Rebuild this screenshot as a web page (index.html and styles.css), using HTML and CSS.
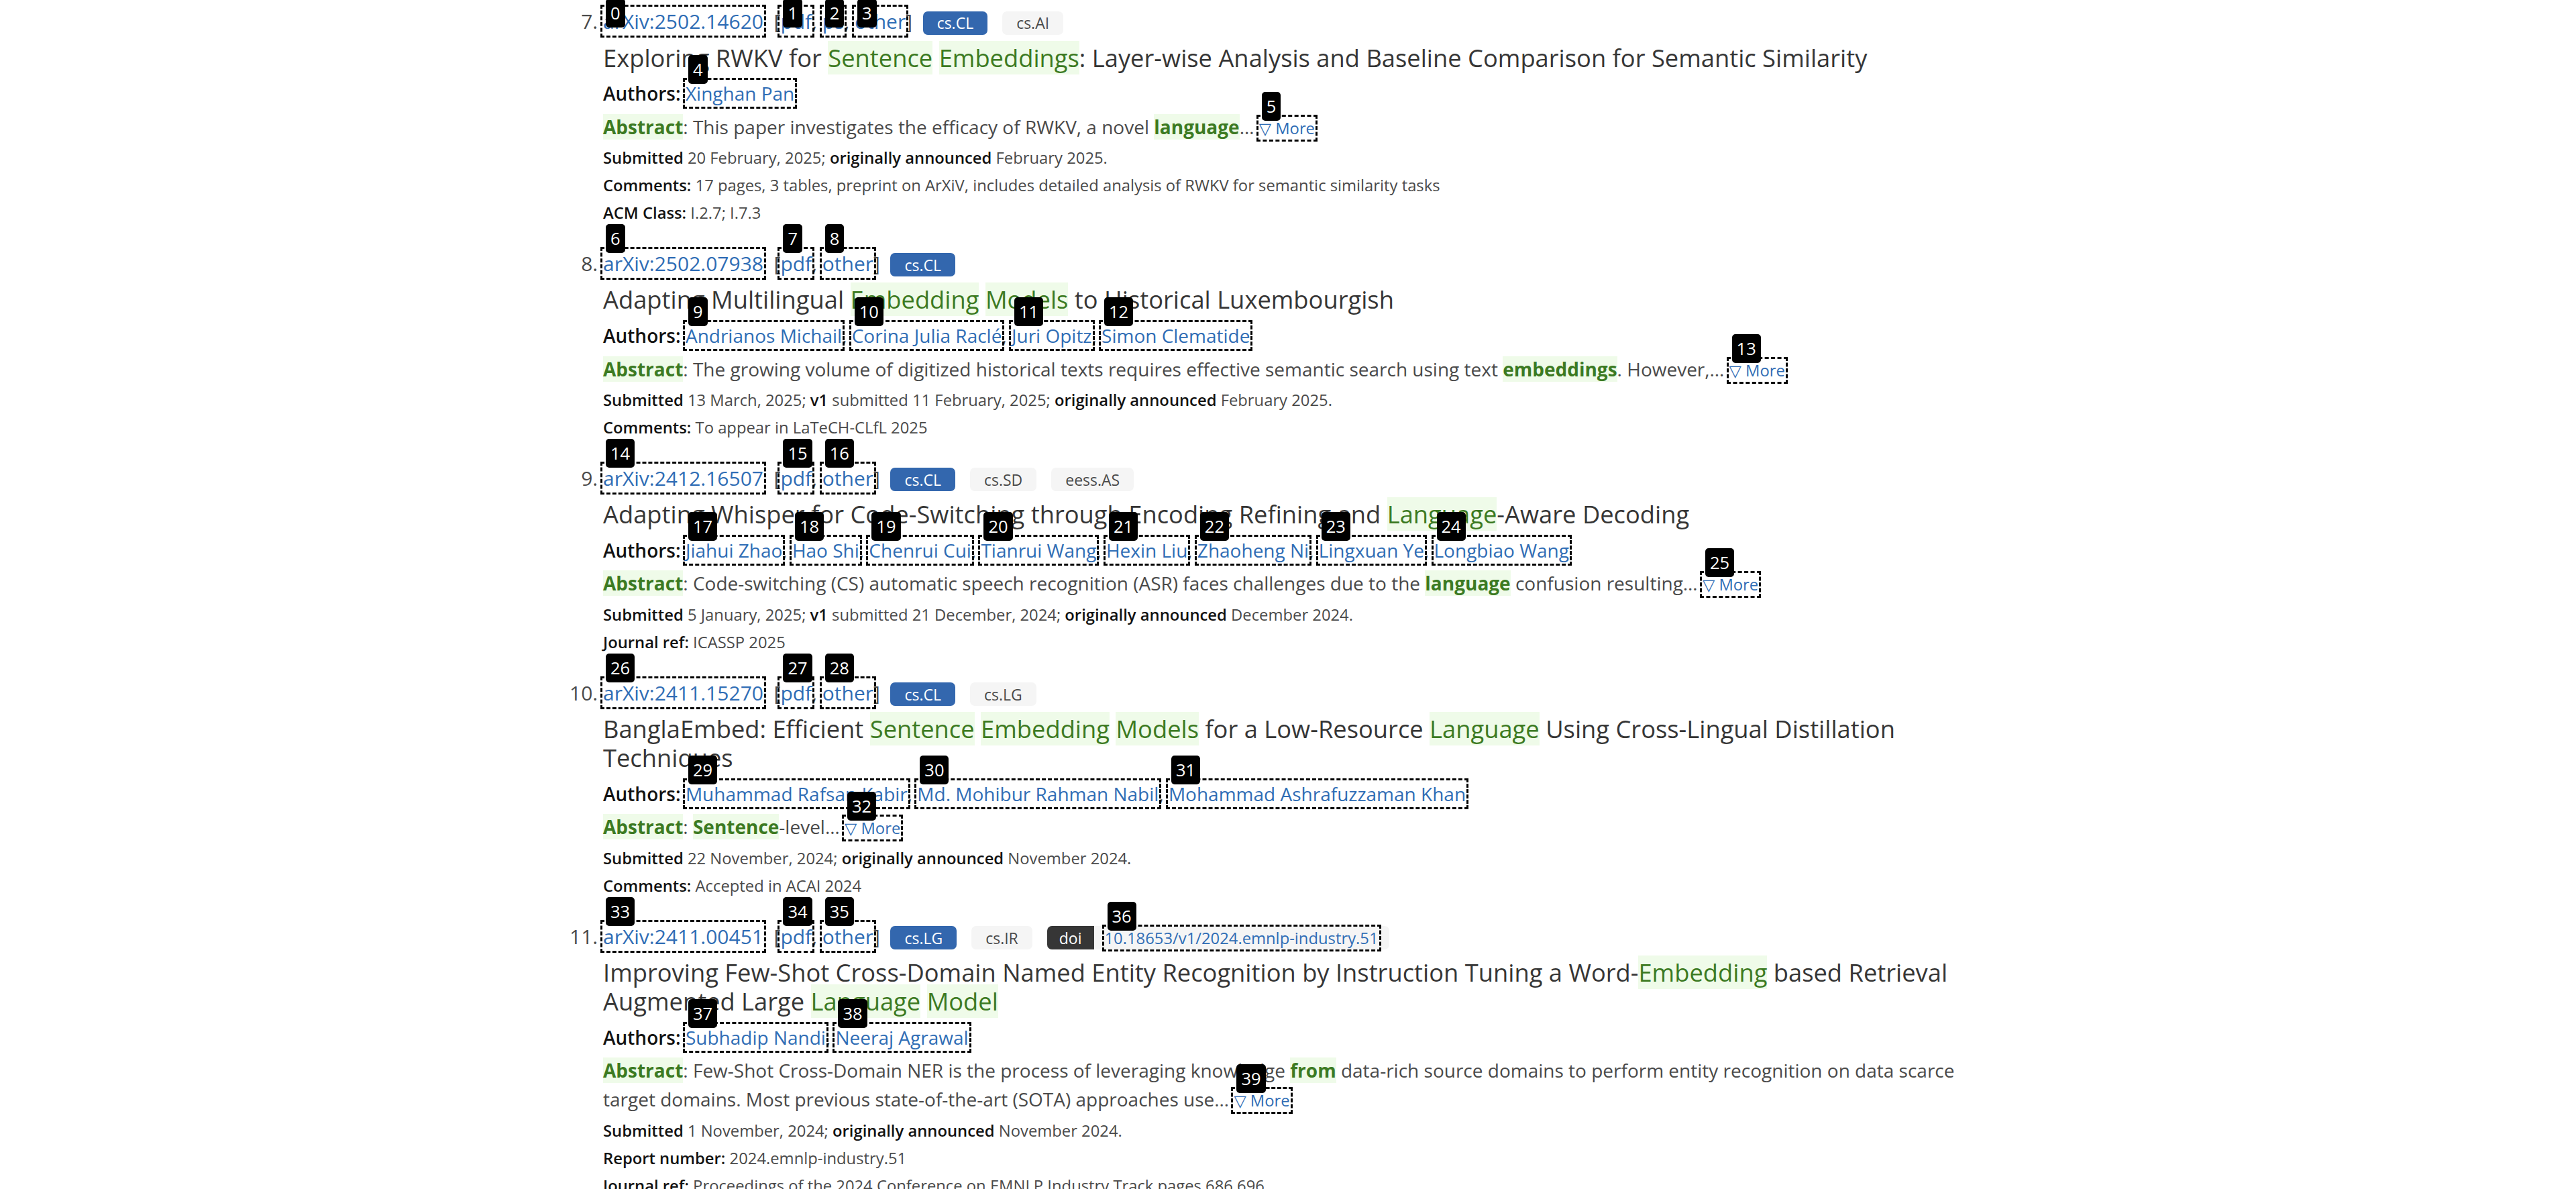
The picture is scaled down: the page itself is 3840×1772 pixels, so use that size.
FILE: index.html
```html
<!DOCTYPE html>
<html lang="en">
<head>
  <meta charset="UTF-8">
  <meta name="viewport" content="width=device-width, initial-scale=1.0">
  <title>Search | arXiv e-print repository</title>
  <link rel="stylesheet" href="styles.css">
</head>
<body>
<main class="container">
  <ol class="results" start="7">

    <li class="result">
      <div class="result-head">
        <span class="pin"><a class="box" href="#">arXiv:2502.14620</a><span class="som top">0</span></span>
        &nbsp;[<span class="pin"><a class="box" href="#">pdf</a><span class="som top">1</span></span>, <span class="pin"><a class="box" href="#">ps</a><span class="som top">2</span></span>, <span class="pin"><a class="box" href="#">other</a><span class="som top">3</span></span>]&nbsp;
        <div class="tags">
          <span class="tag is-link">cs.CL</span>
          <span class="tag">cs.AI</span>
        </div>
      </div>
      <p class="title">Exploring RWKV for <span class="hit">Sentence</span> <span class="hit">Embeddings</span>: Layer-wise Analysis and Baseline Comparison for Semantic Similarity</p>
      <p class="authors"><span class="label">Authors:</span> <span class="pin"><a class="box" href="#">Xinghan Pan</a><span class="som">4</span></span></p>
      <p class="abstract"><span class="hit strong">Abstract</span>: This paper investigates the efficacy of RWKV, a novel <span class="hit strong">language</span>&hellip; <span class="pin more"><a class="box" href="#">&#9661;&nbsp;More</a><span class="som">5</span></span></p>
      <p class="meta"><b>Submitted</b> 20 February, 2025; <b>originally announced</b> February 2025.</p>
      <p class="meta"><b>Comments:</b> 17 pages, 3 tables, preprint on ArXiV, includes detailed analysis of RWKV for semantic similarity tasks</p>
      <p class="meta"><b>ACM Class:</b> I.2.7; I.7.3</p>
    </li>

    <li class="result">
      <div class="result-head">
        <span class="pin"><a class="box" href="#">arXiv:2502.07938</a><span class="som">6</span></span>
        &nbsp;[<span class="pin"><a class="box" href="#">pdf</a><span class="som">7</span></span>, <span class="pin"><a class="box" href="#">other</a><span class="som">8</span></span>]&nbsp;
        <div class="tags">
          <span class="tag is-link">cs.CL</span>
        </div>
      </div>
      <p class="title">Adapting Multilingual <span class="hit">Embedding</span> <span class="hit">Models</span> to Historical Luxembourgish</p>
      <p class="authors"><span class="label">Authors:</span> <span class="pin"><a class="box" href="#">Andrianos Michail</a><span class="som">9</span></span>, <span class="pin"><a class="box" href="#">Corina Julia Racl&eacute;</a><span class="som">10</span></span>, <span class="pin"><a class="box" href="#">Juri Opitz</a><span class="som">11</span></span>, <span class="pin"><a class="box" href="#">Simon Clematide</a><span class="som">12</span></span></p>
      <p class="abstract"><span class="hit strong">Abstract</span>: The growing volume of digitized historical texts requires effective semantic search using text <span class="hit strong">embeddings</span>. However,&hellip; <span class="pin more"><a class="box" href="#">&#9661;&nbsp;More</a><span class="som">13</span></span></p>
      <p class="meta"><b>Submitted</b> 13 March, 2025; <b>v1</b> submitted 11 February, 2025; <b>originally announced</b> February 2025.</p>
      <p class="meta"><b>Comments:</b> To appear in LaTeCH-CLfL 2025</p>
    </li>

    <li class="result">
      <div class="result-head">
        <span class="pin"><a class="box" href="#">arXiv:2412.16507</a><span class="som">14</span></span>
        &nbsp;[<span class="pin"><a class="box" href="#">pdf</a><span class="som">15</span></span>, <span class="pin"><a class="box" href="#">other</a><span class="som">16</span></span>]&nbsp;
        <div class="tags">
          <span class="tag is-link">cs.CL</span>
          <span class="tag">cs.SD</span>
          <span class="tag">eess.AS</span>
        </div>
      </div>
      <p class="title">Adapting Whisper for Code-Switching through Encoding Refining and <span class="hit">Language</span>-Aware Decoding</p>
      <p class="authors"><span class="label">Authors:</span> <span class="pin"><a class="box" href="#">Jiahui Zhao</a><span class="som">17</span></span>, <span class="pin"><a class="box" href="#">Hao Shi</a><span class="som">18</span></span>, <span class="pin"><a class="box" href="#">Chenrui Cui</a><span class="som">19</span></span>, <span class="pin"><a class="box" href="#">Tianrui Wang</a><span class="som">20</span></span>, <span class="pin"><a class="box" href="#">Hexin Liu</a><span class="som">21</span></span>, <span class="pin"><a class="box" href="#">Zhaoheng Ni</a><span class="som">22</span></span>, <span class="pin"><a class="box" href="#">Lingxuan Ye</a><span class="som">23</span></span>, <span class="pin"><a class="box" href="#">Longbiao Wang</a><span class="som">24</span></span></p>
      <p class="abstract"><span class="hit strong">Abstract</span>: Code-switching (CS) automatic speech recognition (ASR) faces challenges due to the <span class="hit strong">language</span> confusion resulting&hellip; <span class="pin more"><a class="box" href="#">&#9661;&nbsp;More</a><span class="som">25</span></span></p>
      <p class="meta"><b>Submitted</b> 5 January, 2025; <b>v1</b> submitted 21 December, 2024; <b>originally announced</b> December 2024.</p>
      <p class="meta"><b>Journal ref:</b> ICASSP 2025</p>
    </li>

    <li class="result">
      <div class="result-head">
        <span class="pin"><a class="box" href="#">arXiv:2411.15270</a><span class="som">26</span></span>
        &nbsp;[<span class="pin"><a class="box" href="#">pdf</a><span class="som">27</span></span>, <span class="pin"><a class="box" href="#">other</a><span class="som">28</span></span>]&nbsp;
        <div class="tags">
          <span class="tag is-link">cs.CL</span>
          <span class="tag">cs.LG</span>
        </div>
      </div>
      <p class="title">BanglaEmbed: Efficient <span class="hit">Sentence</span> <span class="hit">Embedding</span> <span class="hit">Models</span> for a Low-Resource <span class="hit">Language</span> Using Cross-Lingual Distillation Techniques</p>
      <p class="authors"><span class="label">Authors:</span> <span class="pin"><a class="box" href="#">Muhammad Rafsan Kabir</a><span class="som">29</span></span>, <span class="pin"><a class="box" href="#">Md. Mohibur Rahman Nabil</a><span class="som">30</span></span>, <span class="pin"><a class="box" href="#">Mohammad Ashrafuzzaman Khan</a><span class="som">31</span></span></p>
      <p class="abstract"><span class="hit strong">Abstract</span>: <span class="hit strong">Sentence</span>-level&hellip; <span class="pin more"><a class="box" href="#">&#9661;&nbsp;More</a><span class="som">32</span></span></p>
      <p class="meta"><b>Submitted</b> 22 November, 2024; <b>originally announced</b> November 2024.</p>
      <p class="meta"><b>Comments:</b> Accepted in ACAI 2024</p>
    </li>

    <li class="result">
      <div class="result-head">
        <span class="pin"><a class="box" href="#">arXiv:2411.00451</a><span class="som">33</span></span>
        &nbsp;[<span class="pin"><a class="box" href="#">pdf</a><span class="som">34</span></span>, <span class="pin"><a class="box" href="#">other</a><span class="som">35</span></span>]&nbsp;
        <div class="tags">
          <span class="tag is-link">cs.LG</span>
          <span class="tag">cs.IR</span>
          <span class="addons">
            <span class="tag dark">doi</span>
            <span class="tag light"><span class="pin"><a class="box" href="#">10.18653/v1/2024.emnlp-industry.51</a><span class="som">36</span></span></span>
          </span>
        </div>
      </div>
      <p class="title">Improving Few-Shot Cross-Domain Named Entity Recognition by Instruction Tuning a Word-<span class="hit">Embedding</span> based Retrieval Augmented Large <span class="hit">Language</span> <span class="hit">Model</span></p>
      <p class="authors"><span class="label">Authors:</span> <span class="pin"><a class="box" href="#">Subhadip Nandi</a><span class="som">37</span></span>, <span class="pin"><a class="box" href="#">Neeraj Agrawal</a><span class="som">38</span></span></p>
      <p class="abstract"><span class="hit strong">Abstract</span>: Few-Shot Cross-Domain NER is the process of leveraging knowledge <span class="hit strong">from</span> data-rich source domains to perform entity recognition on data scarce target domains. Most previous state-of-the-art (SOTA) approaches use&hellip; <span class="pin more"><a class="box" href="#">&#9661;&nbsp;More</a><span class="som">39</span></span></p>
      <p class="meta"><b>Submitted</b> 1 November, 2024; <b>originally announced</b> November 2024.</p>
      <p class="meta"><b>Report number:</b> 2024.emnlp-industry.51</p>
      <p class="meta"><b>Journal ref:</b> Proceedings of the 2024 Conference on EMNLP Industry Track pages 686,696</p>
    </li>

  </ol>
</main>
</body>
</html>
```

FILE: styles.css
```css
html, body {
  margin: 0;
  padding: 0;
  background-color: #fff;
}

body {
  font-family: "Open Sans", "DejaVu Sans", sans-serif;
  color: #4a4a4a;
}

a {
  color: #2f6db5;
  text-decoration: none;
}

.container {
  width: 2160px;
  margin: 0 auto;
  padding-top: 9px;
}

.results {
  margin: 0;
  padding: 0 30px 0 59px;
}

.result {
  font-size: 30px;
  margin-bottom: 31.6px;
}

.result::marker {
  color: #4a4a4a;
}

.result-head {
  line-height: 45px;
  white-space: nowrap;
}

/* tags */
.tags {
  display: inline-flex;
  gap: 22px;
  vertical-align: baseline;
}

.tag {
  display: inline-flex;
  align-items: center;
  height: 35px;
  padding: 0 21px;
  border-radius: 7px;
  font-size: 23px;
  line-height: normal;
  background-color: #f5f5f5;
  color: #4a4a4a;
}

.tag.is-link {
  background-color: #3367ae;
  color: #fff;
}

.addons {
  display: inline-flex;
}

.tag.dark {
  padding: 0 18px;
  background-color: #363636;
  color: #fff;
  border-radius: 7px 0 0 7px;
}

.tag.light {
  padding: 0 16px 0 16px;
  font-size: 23.8px;
  border-radius: 0 7px 7px 0;
}

/* result body */
.title {
  margin: 10.6px 0 0;
  font-size: 36.3px;
  line-height: 43px;
  color: #363636;
}

.authors {
  margin: 10.6px 0 0;
  font-size: 28px;
  line-height: 42px;
}

.authors .label {
  color: #121212;
  font-weight: 600;
}

.abstract {
  margin: 7.5px 0 0;
  font-size: 28px;
  line-height: 43px;
}

.meta {
  margin: 0;
  font-size: 23.8px;
  line-height: 41px;
}

.abstract + .meta {
  margin-top: 2.6px;
}

.meta b {
  color: #121212;
  font-weight: 600;
}

.hit {
  background-color: #effbe9;
  color: #3c7a22;
}

.hit.strong {
  font-weight: 700;
}

/* marks drawn over the clickable elements */
.pin {
  position: relative;
}

.pin.more {
  font-size: 23.8px;
}

.box {
  outline: 3px dashed #000;
  outline-offset: 1px;
}

.som {
  position: absolute;
  left: 4px;
  top: -38px;
  z-index: 2;
  padding: 0 7px;
  border-radius: 5px;
  background-color: #000;
  color: #fff;
  font-size: 25.5px;
  font-weight: 400;
  line-height: 43px;
  white-space: nowrap;
}

.som.top {
  top: -13px;
}
```
